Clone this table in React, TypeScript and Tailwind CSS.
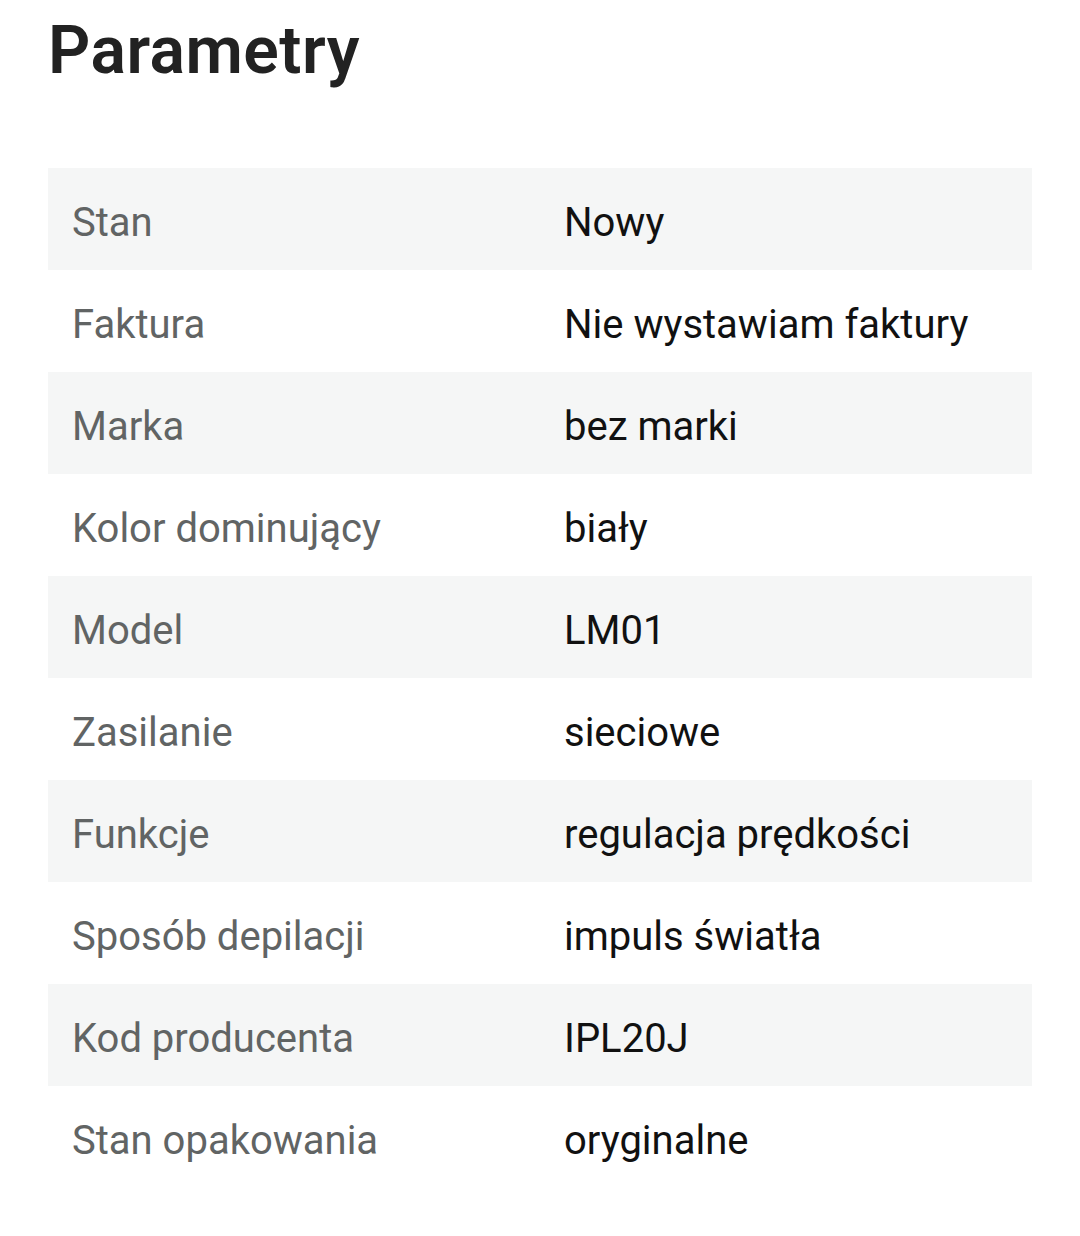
const params: [string, string][] = [
  ["Stan", "Nowy"],
  ["Faktura", "Nie wystawiam faktury"],
  ["Marka", "bez marki"],
  ["Kolor dominujący", "biały"],
  ["Model", "LM01"],
  ["Zasilanie", "sieciowe"],
  ["Funkcje", "regulacja prędkości"],
  ["Sposób depilacji", "impuls światła"],
  ["Kod producenta", "IPL20J"],
  ["Stan opakowania", "oryginalne"],
];

export default function App() {
  return (
    <div
      className="min-h-[1236px] w-[1080px] bg-white px-12"
      style={{ fontFamily: "Roboto, 'Noto Sans', sans-serif" }}
    >
      <h1 className="pt-[12px] text-[66px] font-semibold leading-[78px] tracking-[0.5px] text-[#222222]">
        Parametry
      </h1>

      <div className="mt-[78px] flex flex-col">
        {params.map(([label, value], i) => (
          <div
            key={label}
            className={`flex h-[102px] items-center pt-[7px] text-[40px] ${
              i % 2 === 0 ? "bg-[#f5f6f6]" : "bg-white"
            }`}
          >
            <div className="w-[516px] pl-[24px] text-[#616464]">{label}</div>
            <div className="text-[#111111]">{value}</div>
          </div>
        ))}
      </div>
    </div>
  );
}
